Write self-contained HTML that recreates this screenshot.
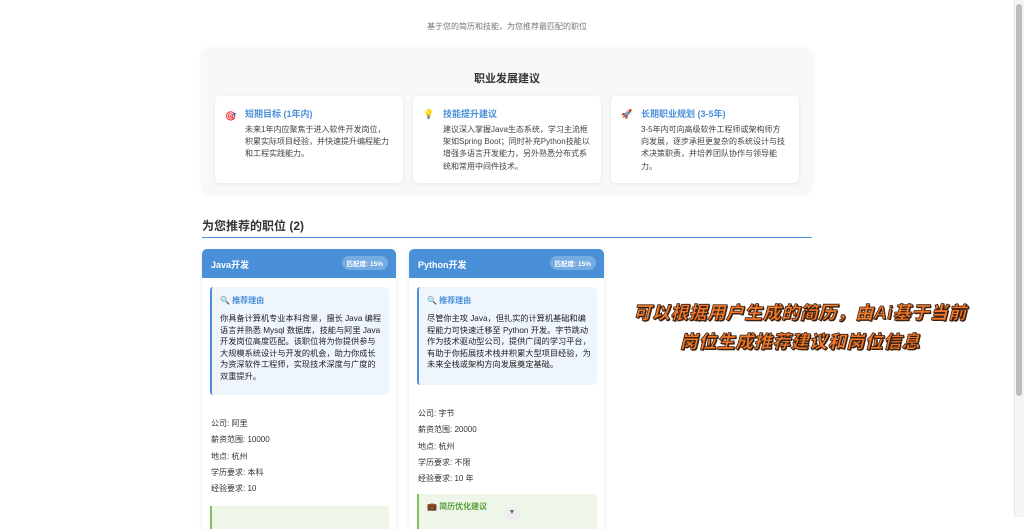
<!DOCTYPE html>
<html><head><meta charset="utf-8"><style>
*{margin:0;padding:0;box-sizing:border-box}
body{width:1024px;height:517px;overflow:hidden;background:#fff;font-family:"Liberation Sans","Noto Sans CJK SC",sans-serif;color:#333;position:relative}
.a{position:absolute}
.sub{top:21px;left:0;width:1014px;text-align:center;font-size:8px;color:#777}
.panel{left:202px;top:48px;width:610px;height:145px;background:#f7f8fa;border-radius:8px;box-shadow:0 1px 6px rgba(0,0,0,.06)}
.pt{left:202px;top:70px;width:610px;text-align:center;font-size:11px;font-weight:bold;color:#333}
.card{background:#fff;border-radius:5px;box-shadow:0 1px 4px rgba(0,0,0,.08)}
.ct{font-size:9px;color:#4a90d9;font-weight:bold}
.cx{font-size:8px;line-height:12.2px;color:#444}
.ic{font-size:9px}
.h2{left:202px;top:217px;font-size:12px;font-weight:bold;color:#333}
.line{left:202px;top:237px;width:610px;height:1px;background:#4a90d9}
.job{background:#fff;border-radius:5px;box-shadow:0 1px 5px rgba(0,0,0,.1);overflow:hidden}
.jh{height:29px;background:#4a90d9;color:#fff;font-size:9px;font-weight:bold;padding:9px 0 0 9px;position:relative}
.badge{position:absolute;right:8px;top:7px;background:rgba(255,255,255,.25);border-radius:8px;font-size:6.5px;padding:2px 5px;font-weight:bold}
.rs{background:#eef5fd;border-left:2px solid #4a90d9;border-radius:3px}
.rt{font-size:8px;color:#4a90d9;font-weight:bold;padding:8px 0 0 8px}
.rx{font-size:8.2px;line-height:11.6px;color:#222;padding:7px 6px 0 8px}
.info{font-size:8px;color:#333;line-height:16.3px}
.ov{left:610px;width:380px;text-align:center;font-size:18px;font-weight:900;font-style:italic;color:#f07a2a;-webkit-text-stroke:0.8px #3a2010;text-shadow:1px 1px 0 #3a2010;letter-spacing:0.5px}
</style></head><body>
<div class="a sub">基于您的简历和技能，为您推荐最匹配的职位</div>
<div class="a panel"></div>
<div class="a pt">职业发展建议</div>
<div class="a card" style="left:215px;top:96px;width:188px;height:87px"></div>
<div class="a ic" style="left:225px;top:111px">🎯</div>
<div class="a ct" style="left:245px;top:107px">短期目标 (1年内)</div>
<div class="a cx" style="left:245px;top:124px;width:146px">未来1年内应聚焦于进入软件开发岗位，积累实际项目经验，并快速提升编程能力和工程实践能力。</div>
<div class="a card" style="left:413px;top:96px;width:188px;height:87px"></div>
<div class="a ic" style="left:423px;top:109px">💡</div>
<div class="a ct" style="left:443px;top:107px">技能提升建议</div>
<div class="a cx" style="left:443px;top:124px;width:148px">建议深入掌握Java生态系统，学习主流框架如Spring Boot；同时补充Python技能以增强多语言开发能力，另外熟悉分布式系统和常用中间件技术。</div>
<div class="a card" style="left:611px;top:96px;width:188px;height:87px"></div>
<div class="a ic" style="left:621px;top:109px">🚀</div>
<div class="a ct" style="left:641px;top:107px">长期职业规划 (3-5年)</div>
<div class="a cx" style="left:641px;top:124px;width:144px">3-5年内可向高级软件工程师或架构师方向发展，逐步承担更复杂的系统设计与技术决策职责，并培养团队协作与领导能力。</div>
<div class="a h2">为您推荐的职位 (2)</div>
<div class="a line"></div>

<div class="a job" style="left:202px;top:249px;width:194px;height:280px">
<div class="jh">Java开发<span class="badge">匹配度: 15%</span></div>
<div class="rs" style="margin:9px 7px 0 8px;height:108px"><div class="rt">🔍 推荐理由</div><div class="rx">你具备计算机专业本科背景，擅长 Java 编程语言并熟悉 Mysql 数据库，技能与阿里 Java 开发岗位高度匹配。该职位将为你提供参与大规模系统设计与开发的机会，助力你成长为资深软件工程师，实现技术深度与广度的双重提升。</div></div>
<div class="info" style="padding:21px 0 0 9px">公司: 阿里<br>薪资范围: 10000<br>地点: 杭州<br>学历要求: 本科<br>经验要求: 10</div>
<div style="margin:9px 7px 0 8px;height:30px;background:#eef6ea;border-left:2px solid #7cc35a"></div>
</div>

<div class="a job" style="left:409px;top:249px;width:195px;height:280px">
<div class="jh">Python开发<span class="badge">匹配度: 15%</span></div>
<div class="rs" style="margin:9px 7px 0 8px;height:98px"><div class="rt">🔍 推荐理由</div><div class="rx">尽管你主攻 Java，但扎实的计算机基础和编程能力可快速迁移至 Python 开发。字节跳动作为技术驱动型公司，提供广阔的学习平台，有助于你拓展技术栈并积累大型项目经验，为未来全栈或架构方向发展奠定基础。</div></div>
<div class="info" style="padding:21px 0 0 9px">公司: 字节<br>薪资范围: 20000<br>地点: 杭州<br>学历要求: 不限<br>经验要求: 10 年</div>
<div style="margin:7px 7px 0 8px;height:40px;background:#eef6ea;border-left:2px solid #7cc35a;font-size:8px;color:#5a9e3a;font-weight:bold;padding:7px 0 0 8px">💼 简历优化建议</div>
</div>
<div class="a" style="left:504px;top:506px;width:16px;height:16px;border-radius:50%;background:#eee;font-size:7px;text-align:center;line-height:14px;color:#666">▼</div>

<div class="a ov" style="top:299px">可以根据用户生成的简历，由Ai基于当前</div>
<div class="a ov" style="top:328px">岗位生成推荐建议和岗位信息</div>

<div class="a" style="left:1014px;top:0;width:10px;height:517px;background:#f5f5f5;border-left:1px solid #e6e6e6"></div>
<div class="a" style="left:1016px;top:4px;width:6px;height:392px;background:#bdbdbd;border-radius:3px"></div>
</body></html>
